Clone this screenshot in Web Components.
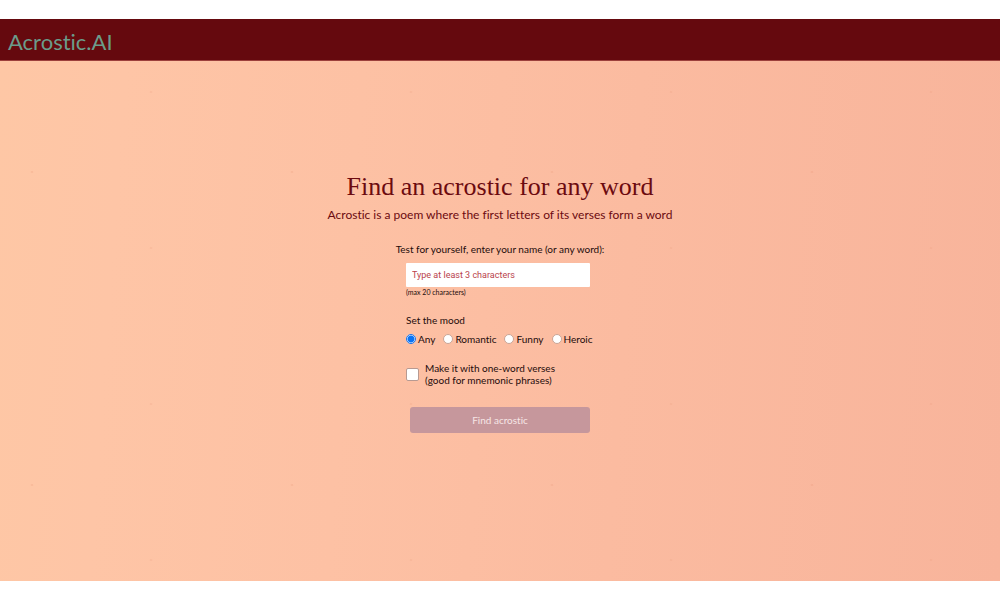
<!DOCTYPE html>
<html lang="en">
<head>
<meta charset="utf-8">
<title>Acrostic.AI</title>
<style>
html, body { margin: 0; background: #fff; }
body { font-family: Lato, sans-serif; font-variant-ligatures: none; color: #240b0b; }
</style>
</head>
<body>
<acrostic-page>
  <site-header slot="header">Acrostic.AI</site-header>
  <page-intro>
    <span slot="title">Find an acrostic for any word</span>
    <span slot="lead">Acrostic is a poem where the first letters of its verses form a word</span>
  </page-intro>
  <acrostic-form></acrostic-form>
</acrostic-page>
<script>
function define(name, html, setup) {
  const template = document.createElement('template');
  template.innerHTML = html;
  customElements.define(name, class extends HTMLElement {
    constructor() {
      super();
      this.attachShadow({ mode: 'open' }).append(template.content.cloneNode(true));
      if (setup) setup(this.shadowRoot);
    }
  });
}

define('acrostic-page', `
<style>
:host { display: flex; flex-direction: column; box-sizing: border-box; min-height: 100vh; padding: 19px 0; }
main {
  flex: 1; display: flex; flex-direction: column; align-items: center;
  box-sizing: border-box; padding: 108px 16px 48px;
  background:
    radial-gradient(ellipse 2px 1px at 32px 111px, #d9805f55, transparent) 0 0 / 260px 313px,
    radial-gradient(ellipse 2px 1px at 151px 31px, #d9805f40, transparent) 0 0 / 260px 156px,
    linear-gradient(94deg, #fec7a5 0%, #fec5a6 12%, #fdc1a4 35%, #fbbba0 62%, #f8b49b 100%);
}
</style>
<slot name="header"></slot>
<main><slot></slot></main>`);

define('site-header', `
<style>
:host { display: block; }
header { display: flex; align-items: center; height: 41px; padding: 0 8px; background: #65090e; border-bottom: 1px solid #9c403c; }
a { color: #6b9c8b; font-size: 22px; line-height: 28px; text-decoration: none; padding-top: 5px; }
</style>
<header><a href="#"><slot></slot></a></header>`);

define('page-intro', `
<style>
:host { display: block; text-align: center; color: #6c0a10; }
h1 { margin: 0; font: 400 26px/36px "Liberation Serif", serif; }
p { margin: 0; font-size: 12px; line-height: 20px; }
</style>
<h1><slot name="title"></slot></h1>
<p><slot name="lead"></slot></p>`);

define('mood-picker', `
<style>
:host { display: block; }
fieldset { margin: 0; padding: 0; border: 0; font-size: 10px; line-height: 14px; }
legend { padding: 0; margin-bottom: 5px; }
div { display: flex; gap: 8px; }
label { display: flex; align-items: center; gap: 2px; white-space: nowrap; }
input { appearance: none; box-sizing: border-box; margin: 0; width: 10px; height: 10px; border: 1px solid #c9a596; border-radius: 50%; background: #fff; }
input:checked { border-color: #1675ee; background: radial-gradient(circle, #0873f5 3px, #fff 4px); }
</style>
<fieldset><legend>Set the mood</legend><div></div></fieldset>`, root => {
  const row = root.querySelector('div');
  ['Any', 'Romantic', 'Funny', 'Heroic'].forEach((mood, i) => {
    const label = document.createElement('label');
    const input = document.createElement('input');
    input.type = 'radio';
    input.name = 'mood';
    input.value = mood.toLowerCase();
    input.checked = i === 0;
    label.append(input, mood);
    row.append(label);
  });
});

define('acrostic-form', `
<style>
:host { display: block; margin-top: 16px; }
form { display: flex; flex-direction: column; align-items: center; font-size: 10px; }
.prompt { line-height: 16px; }
.fields { width: 188px; display: flex; flex-direction: column; }
.word { box-sizing: border-box; width: 184px; height: 24px; margin-top: 6px; padding: 0 6px; border: 0; border-radius: 1px; background: #fff; color: #6c0a10; font: 9px Roboto, sans-serif; }
.word::placeholder { color: #b9434b; opacity: 1; }
small { font-size: 7px; line-height: 10px; }
mood-picker { margin-top: 16px; }
.option { display: flex; align-items: center; gap: 6px; margin-top: 16px; line-height: 12px; white-space: nowrap; }
.option input { appearance: none; margin: 0; box-sizing: border-box; width: 13px; height: 13px; border: 1px solid #b79a92; border-radius: 2px; background: #fff; }
.option input:checked { background: #65090e; }
button { width: 180px; height: 26px; margin-top: 21px; border: 0; border-radius: 3px; background: #c6979c; color: #f6e6e6; font: 10px Lato, sans-serif; font-variant-ligatures: none; }
</style>
<form>
  <label class="prompt" for="word">Test for yourself, enter your name (or any word):</label>
  <div class="fields">
    <input class="word" id="word" type="text" maxlength="20" placeholder="Type at least 3 characters" aria-describedby="limit">
    <small id="limit">(max 20 characters)</small>
    <mood-picker></mood-picker>
    <label class="option"><input type="checkbox"><span>Make it with one-word verses<br>(good for mnemonic phrases)</span></label>
  </div>
  <button type="submit" disabled>Find acrostic</button>
</form>`);
</script>
</body>
</html>
